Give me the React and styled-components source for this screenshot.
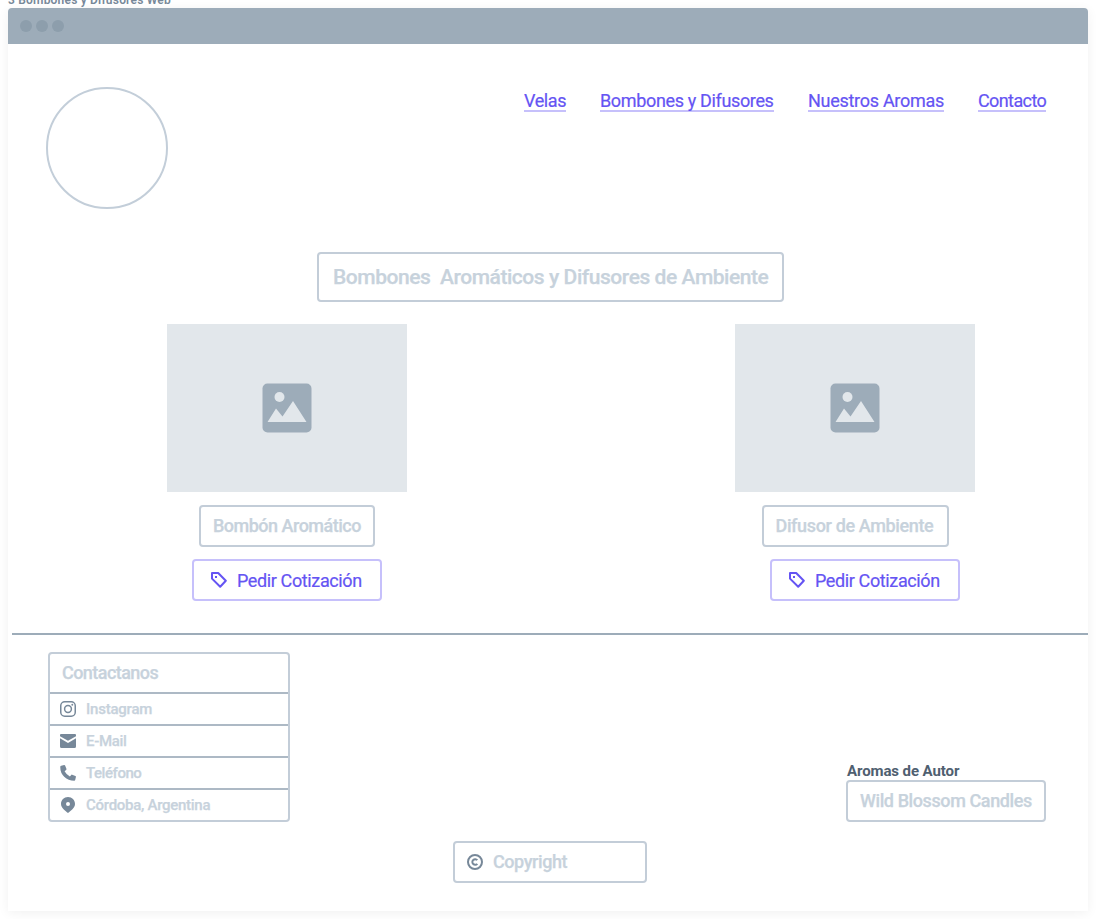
import React from "react";
import styled, { createGlobalStyle } from "styled-components";

const GlobalStyle = createGlobalStyle`
  * { box-sizing: border-box; }
  body { margin: 0; background: #fff; font-family: Roboto, "Liberation Sans", sans-serif; }
`;

const Page = styled.div`
  width: 1096px;
  height: 919px;
  padding: 0 8px;
  overflow: hidden;
`;

const Caption = styled.div`
  height: 8px;
  display: flex;
  align-items: flex-end;
  font-size: 12px;
  line-height: 16px;
  font-weight: 600;
  color: #778899;
  white-space: nowrap;
`;

const Text = styled.span`
  letter-spacing: ${(p) => p.$track || 0}px;
  white-space: pre;
`;

const Frame = styled.main`
  height: 903px;
  border-radius: 4px 4px 0 0;
  background: #fff;
  box-shadow: 0 2px 12px rgba(0, 0, 0, 0.06);
`;

const TitleBar = styled.div`
  height: 36px;
  padding-left: 12px;
  display: flex;
  align-items: center;
  gap: 4px;
  border-radius: 4px 4px 0 0;
  background: #9dacb9;
`;

const Dot = styled.i`
  width: 12px;
  height: 12px;
  border-radius: 50%;
  background: #8d9eac;
`;

const Header = styled.header`
  display: flex;
  justify-content: space-between;
  align-items: flex-start;
  padding: 43px 42px 0 38px;
`;

const Logo = styled.div`
  width: 122px;
  height: 122px;
  border: 2px solid #c3ced9;
  border-radius: 50%;
`;

const Nav = styled.nav`
  display: flex;
  gap: 34px;
  padding-top: 3px;
`;

const NavLink = styled.a`
  width: ${(p) => p.$width}px;
  height: 22px;
  border-bottom: 2px solid #c6c0fb;
  font-size: 18px;
  line-height: 22px;
  white-space: nowrap;
  color: #6554f3;
  -webkit-text-stroke: 0.2px #6554f3;
`;

const Box = styled.div`
  width: ${(p) => p.$width}px;
  height: ${(p) => p.$height || 42}px;
  display: flex;
  align-items: center;
  gap: 10px;
  padding: 0 ${(p) => p.$pad || 12}px;
  border: 2px solid #c3cdd8;
  border-radius: 4px;
  font-size: ${(p) => p.$size || 18}px;
  line-height: 22px;
  font-weight: 500;
  color: #c7d2dc;
  -webkit-text-stroke: 0.25px #c7d2dc;
`;

const TitleRow = styled.div`
  padding: 43px 0 0 309px;
`;

const Products = styled.section`
  display: flex;
  justify-content: space-between;
  padding: 22px 113px 0 159px;
`;

const Card = styled.article`
  width: 240px;
  display: flex;
  flex-direction: column;
  align-items: center;
`;

const Picture = styled.div`
  width: 240px;
  height: 168px;
  display: flex;
  align-items: center;
  justify-content: center;
  background: #e2e7eb;
  margin-bottom: 13px;
`;

const QuoteButton = styled.button`
  width: 190px;
  height: 42px;
  display: flex;
  align-items: center;
  gap: 10px;
  margin: 12px 0 0 ${(p) => p.$shift || 0}px;
  padding: 0 0 0 17px;
  border: 2px solid #c6c0fb;
  border-radius: 4px;
  background: #fff;
  font: 400 18px/22px Roboto, sans-serif;
  color: #6554f3;
  -webkit-text-stroke: 0.2px #6554f3;
`;

const ButtonText = styled(Text)`
  padding-top: 2px;
`;

const Divider = styled.hr`
  height: 2px;
  margin: 32px 0 0 4px;
  border: 0;
  background: #9dacb9;
`;

const Footer = styled.footer`
  display: flex;
  justify-content: space-between;
  align-items: flex-end;
  padding: 17px 42px 0 40px;
`;

const Contacts = styled.section`
  width: 242px;
  height: 170px;
  border: 2px solid #c3cdd8;
  border-radius: 4px;
`;

const ContactTitle = styled.h2`
  height: 38px;
  margin: 0;
  padding-left: 12px;
  font-size: 18px;
  line-height: 38px;
  font-weight: 500;
  color: #c7d2dc;
  -webkit-text-stroke: 0.25px #c7d2dc;
`;

const ContactRow = styled.div`
  height: 32px;
  display: flex;
  align-items: center;
  gap: 10px;
  padding-left: 10px;
  border-top: 2px solid #adb9c5;
  font-size: 15px;
  font-weight: 500;
  color: #c7d2dc;
  -webkit-text-stroke: 0.25px #c7d2dc;
`;

const Brand = styled.div`
  display: flex;
  flex-direction: column;
`;

const BrandLabel = styled.div`
  height: 18px;
  padding-left: 1px;
  font-size: 15px;
  line-height: 18px;
  font-weight: 700;
  color: #4f6070;
`;

const CopyrightRow = styled.div`
  padding: 19px 0 0 445px;
`;

const Icon = styled.svg`
  width: 16px;
  height: 16px;
  flex: none;
  display: block;
`;

const PictureIcon = () => (
  <svg width="50" height="50" viewBox="0 0 50 50">
    <rect x="0.5" y="0.5" width="49" height="49" rx="5" fill="#9dacb9" />
    <circle cx="17.5" cy="14" r="5" fill="#e2e7eb" />
    <path d="M5.5 39 14 25.5 20.5 33.5 31 18 44.5 39Z" fill="#e2e7eb" />
  </svg>
);

const TagIcon = () => (
  <Icon viewBox="0 0 16 16" fill="none">
    <path d="M1 1H7.2L14.8 8.8 9.2 14.8 1 6.6Z" stroke="#6554f3" strokeWidth="2" strokeLinejoin="round" />
    <rect x="4" y="4" width="2" height="2" fill="#6554f3" />
  </Icon>
);

const icons = {
  instagram: (
    <g fill="none" stroke="#778899" strokeWidth="1.5">
      <rect x="0.75" y="0.75" width="14.5" height="14.5" rx="4" />
      <circle cx="8" cy="8" r="3.4" />
      <circle cx="12.3" cy="3.7" r="0.95" fill="#778899" stroke="none" />
    </g>
  ),
  mail: (
    <g fill="#778899">
      <path d="M1 1H15Q16 1 16 2V3.2L8 7.8 0 3.2V2Q0 1 1 1Z" />
      <path d="M0 5.2 8 9.9 16 5.2V13.5Q16 15 14.5 15H1.5Q0 15 0 13.5Z" />
    </g>
  ),
  phone: (
    <path
      fill="#778899"
      d="M1.2.7 4.1.1Q4.8 0 5.1.6L6.4 3.8Q6.7 4.4 6.1 4.9L4.6 6.2Q6.4 9.7 9.9 11.4L11.2 9.9Q11.6 9.4 12.2 9.7L15.4 11Q16.1 11.3 15.9 12L15.2 15Q15 15.8 14.3 15.8 8.3 15.8 4.2 11.7 0 7.6.3 1.7.3.9 1.2.7Z"
    />
  ),
  pin: (
    <path
      fill="#778899"
      fillRule="evenodd"
      d="M8 0C4 0 1 3 1 7 1 10.8 5.5 14.2 8 16 10.5 14.2 15 10.8 15 7 15 3 12 0 8 0ZM8 5A2 2 0 1 1 8 9 2 2 0 1 1 8 5Z"
    />
  ),
  copyright: (
    <g fill="none" stroke="#778899" strokeWidth="2">
      <circle cx="8" cy="8" r="7" />
      <path d="M10.3 6.2A2.8 2.8 0 1 0 10.3 9.8" />
    </g>
  ),
};

const links = [
  { label: "Velas", width: 42, track: -0.4 },
  { label: "Bombones y Difusores", width: 174, track: -0.35 },
  { label: "Nuestros Aromas", width: 136, track: -0.28 },
  { label: "Contacto", width: 68, track: -0.6 },
];

const products = [
  { name: "Bombón Aromático", width: 176, track: -0.5, shift: 0 },
  { name: "Difusor de Ambiente", width: 187, track: -0.36, shift: 20 },
];

const contacts = [
  ["instagram", "Instagram", -0.22],
  ["mail", "E-Mail", -0.3],
  ["phone", "Teléfono", -0.45],
  ["pin", "Córdoba, Argentina", -0.28],
];

export default function App() {
  return (
    <>
      <GlobalStyle />
      <Page>
        <Caption><Text $track={0.2}>3 Bombones y Difusores Web</Text></Caption>
        <Frame>
          <TitleBar><Dot /><Dot /><Dot /></TitleBar>
          <Header>
            <Logo />
            <Nav>
              {links.map((l) => (
                <NavLink key={l.label} $width={l.width}><Text $track={l.track}>{l.label}</Text></NavLink>
              ))}
            </Nav>
          </Header>
          <TitleRow>
            <Box $width={467} $height={50} $size={21} $pad={14}>
              <Text $track={-0.44}>{"Bombones  Aromáticos y Difusores de Ambiente"}</Text>
            </Box>
          </TitleRow>
          <Products>
            {products.map((p) => (
              <Card key={p.name}>
                <Picture><PictureIcon /></Picture>
                <Box $width={p.width}><Text $track={p.track}>{p.name}</Text></Box>
                <QuoteButton $shift={p.shift}>
                  <TagIcon />
                  <ButtonText $track={-0.38}>Pedir Cotización</ButtonText>
                </QuoteButton>
              </Card>
            ))}
          </Products>
          <Divider />
          <Footer>
            <Contacts>
              <ContactTitle><Text $track={-0.55}>Contactanos</Text></ContactTitle>
              {contacts.map(([icon, label, track]) => (
                <ContactRow key={label}>
                  <Icon viewBox="0 0 16 16">{icons[icon]}</Icon>
                  <Text $track={track}>{label}</Text>
                </ContactRow>
              ))}
            </Contacts>
            <Brand>
              <BrandLabel><Text $track={-0.1}>Aromas de Autor</Text></BrandLabel>
              <Box $width={200}><Text $track={-0.4}>Wild Blossom Candles</Text></Box>
            </Brand>
          </Footer>
          <CopyrightRow>
            <Box $width={194}>
              <Icon viewBox="0 0 16 16">{icons.copyright}</Icon>
              <Text $track={-0.42}>Copyright</Text>
            </Box>
          </CopyrightRow>
        </Frame>
      </Page>
    </>
  );
}
